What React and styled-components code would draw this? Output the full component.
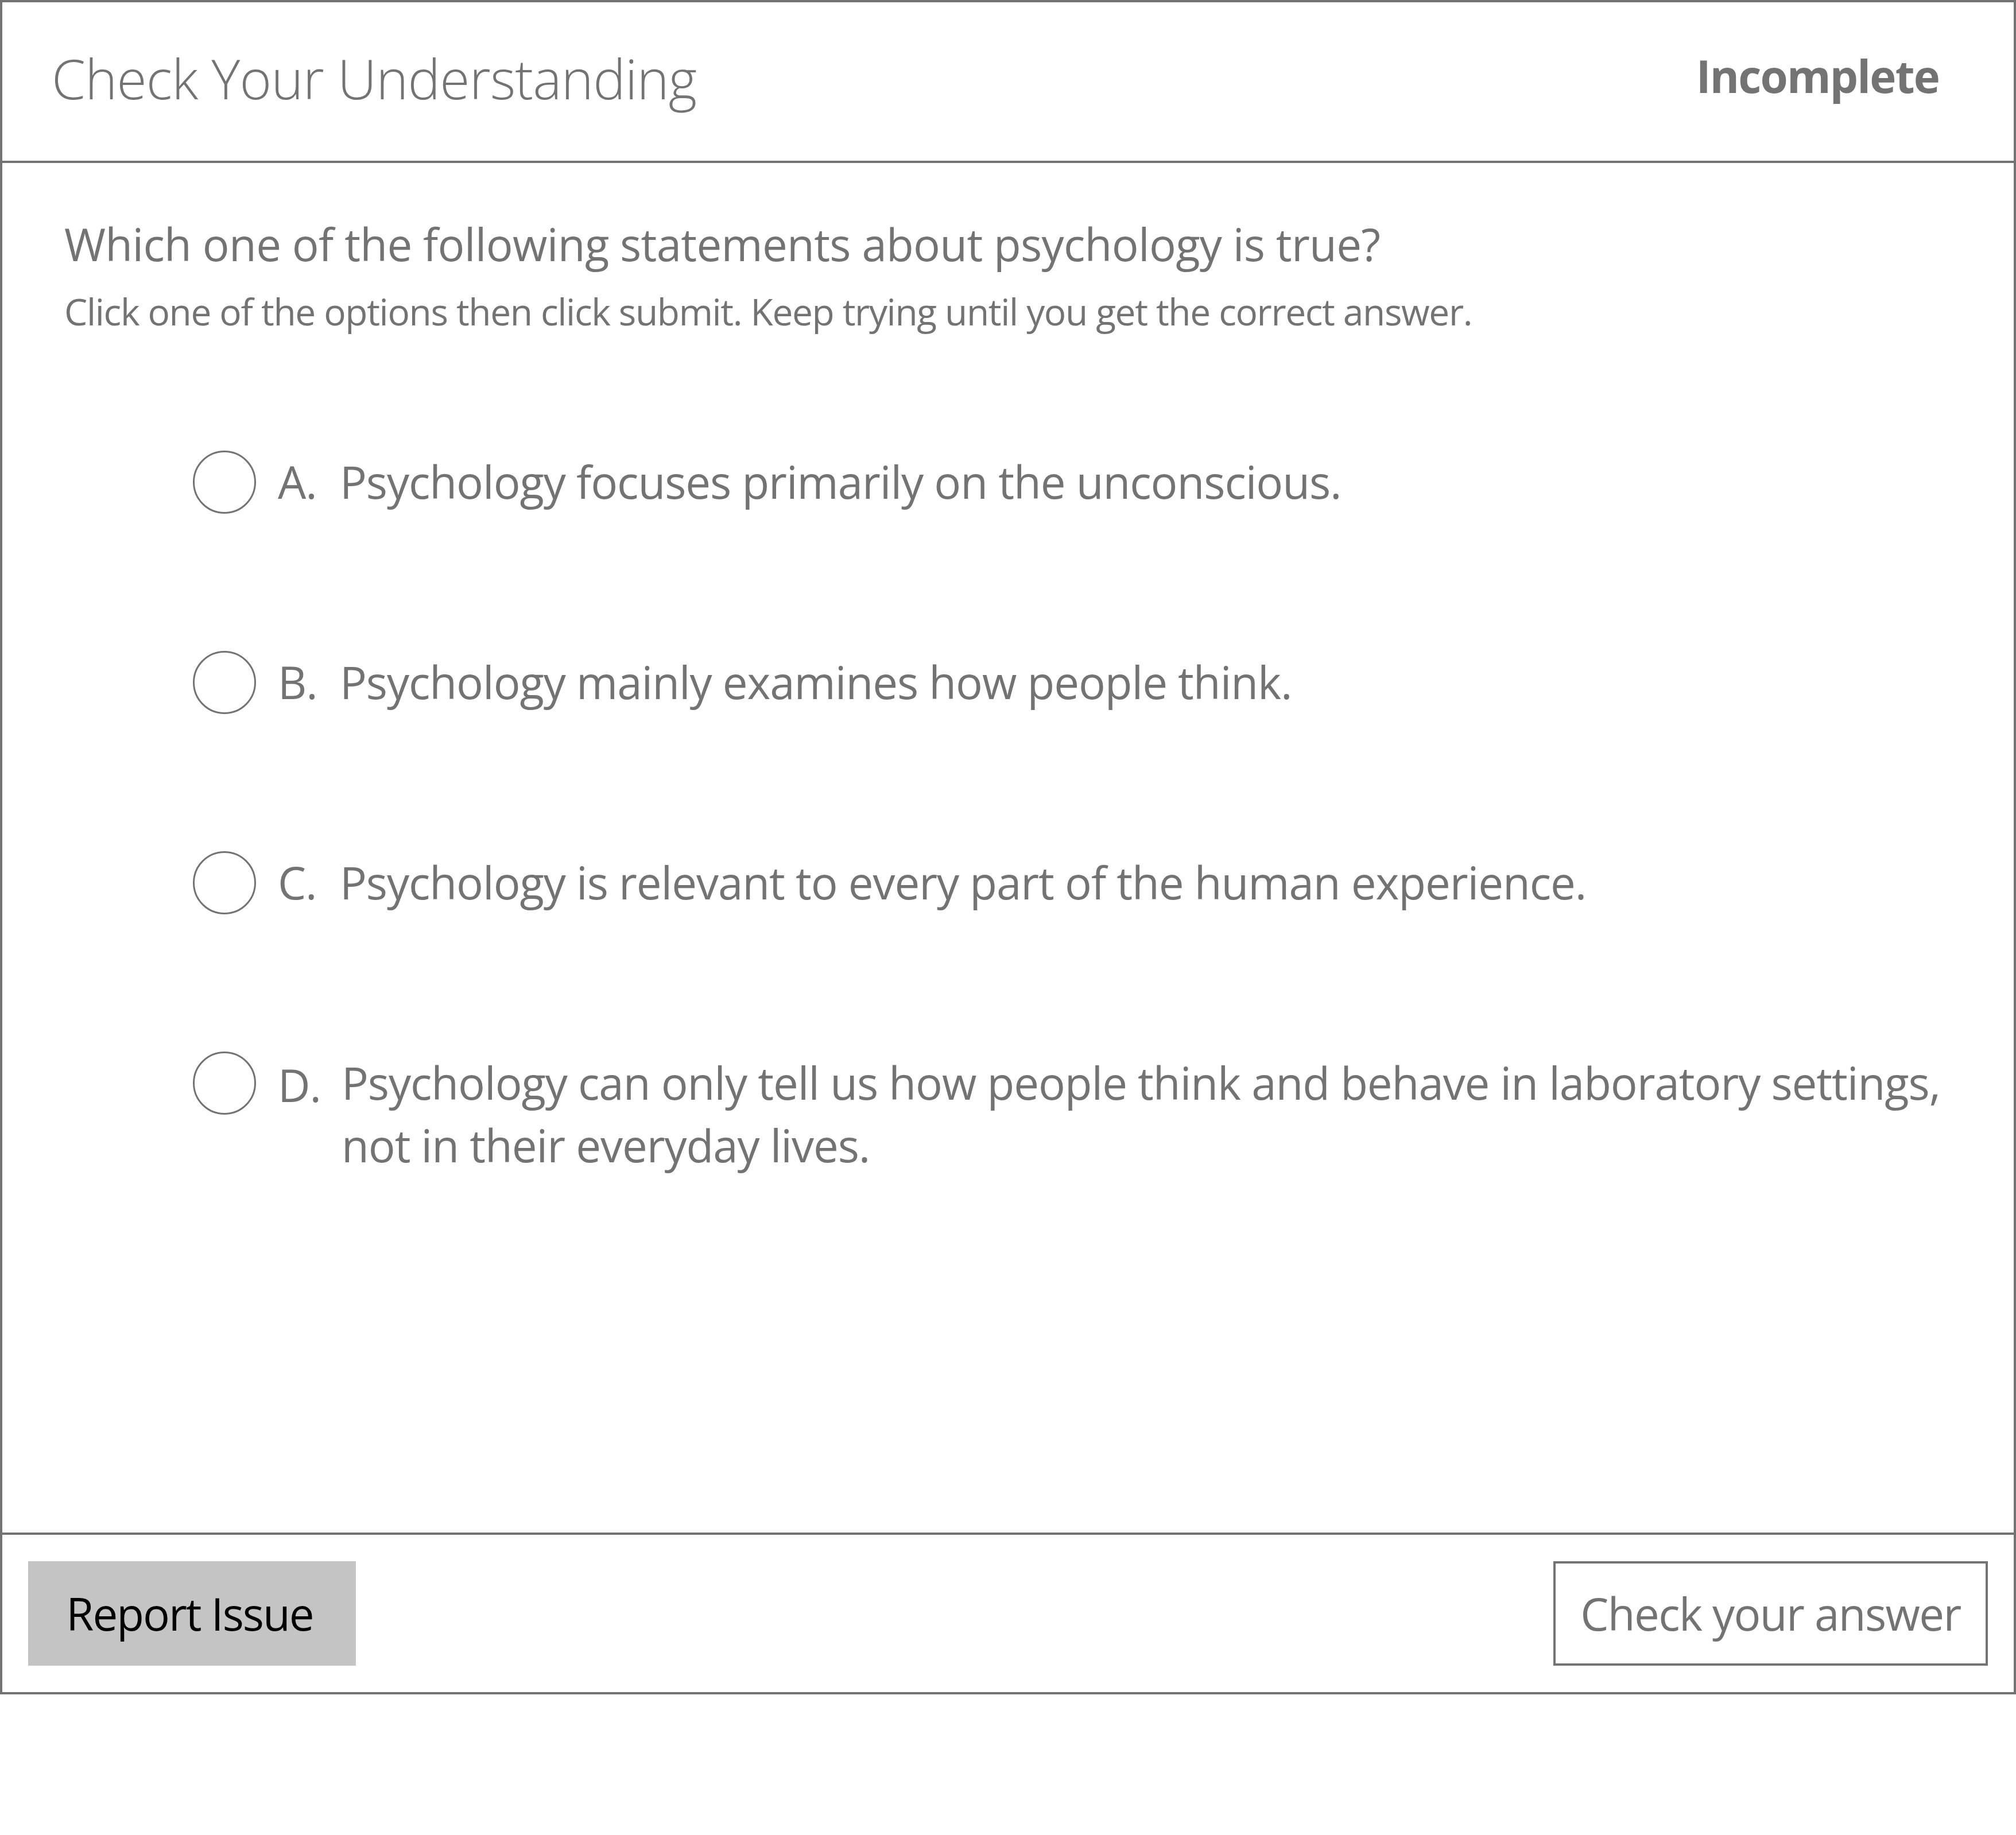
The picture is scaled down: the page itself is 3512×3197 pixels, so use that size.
import React from 'react';
import styled, { createGlobalStyle } from 'styled-components';

const GlobalStyle = createGlobalStyle`
  html, body {
    margin: 0;
    padding: 0;
    background: #ffffff;
  }
  body {
    font-family: 'Open Sans', 'Noto Sans', sans-serif;
    color: #737373;
  }
`;

const Card = styled.div`
  box-sizing: border-box;
  width: 3512px;
  height: 2952px;
  border: 4px solid #737373;
  display: flex;
  flex-direction: column;
  background: #ffffff;
`;

const Header = styled.div`
  box-sizing: border-box;
  height: 280px;
  flex: 0 0 auto;
  display: flex;
  align-items: center;
  justify-content: space-between;
  padding: 0 130px 0 86px;
  border-bottom: 4px solid #737373;
`;

const Title = styled.h1`
  margin: -12px 0 0;
  font-size: 95px;
  font-weight: 300;
  line-height: 1;
  letter-spacing: -0.8px;
  color: #737373;
`;

const Status = styled.div`
  font-size: 78px;
  font-weight: 700;
  line-height: 1;
  letter-spacing: -1.8px;
  color: #737373;
  margin-top: -20px;
`;

const Body = styled.div`
  flex: 1 1 auto;
  padding: 87px 30px 0 108px;
`;

const Question = styled.p`
  margin: 0;
  font-size: 78px;
  line-height: 1.4;
  font-weight: 400;
  letter-spacing: -0.7px;
`;

const Hint = styled.p`
  margin: 18px 0 0;
  font-size: 64px;
  line-height: 1.4;
  letter-spacing: -1.35px;
`;

const OptionList = styled.div`
  display: flex;
  flex-direction: column;
  gap: 239px;
  margin: 197px 0 0 224px;
`;

const Option = styled.label`
  display: grid;
  grid-template-columns: 110px 70px 1fr;
  column-gap: 38px;
  align-items: start;
  font-size: 78px;
  line-height: 1.4;
  letter-spacing: -1.05px;
  cursor: pointer;
`;

const Radio = styled.span`
  box-sizing: border-box;
  width: 110px;
  height: 110px;
  border-radius: 50%;
  border: 3px solid #737373;
`;

const Letter = styled.span`
  white-space: nowrap;
  padding-top: ${props => props.drop || 0}px;
`;

const OptionText = styled.span`
  padding-left: ${props => props.indent || 0}px;
`;

const Footer = styled.div`
  box-sizing: border-box;
  height: 278px;
  flex: 0 0 auto;
  border-top: 4px solid #737373;
  display: flex;
  align-items: center;
  justify-content: space-between;
  padding: 0 45px;
`;

const ReportButton = styled.button`
  width: 571px;
  height: 182px;
  border: none;
  background: #c4c4c4;
  color: #000000;
  font-family: inherit;
  font-size: 78px;
  font-weight: 400;
  letter-spacing: -2px;
  padding: 0 8px 0 0;
  cursor: pointer;
`;

const CheckButton = styled.button`
  box-sizing: border-box;
  width: 757px;
  height: 182px;
  border: 4px solid #737373;
  background: #ffffff;
  color: #737373;
  font-family: inherit;
  font-size: 78px;
  font-weight: 400;
  letter-spacing: -1.6px;
  cursor: pointer;
`;

const options = [
  { letter: 'A.', text: 'Psychology focuses primarily on the unconscious.' },
  { letter: 'B.', text: 'Psychology mainly examines how people think.' },
  { letter: 'C.', text: 'Psychology is relevant to every part of the human experience.' },
  {
    letter: 'D.',
    text: 'Psychology can only tell us how people think and behave in laboratory settings, not in their everyday lives.',
    indent: 3,
    drop: 4,
  },
];

export default function App() {
  return (
    <>
      <GlobalStyle />
      <Card>
        <Header>
          <Title>Check Your Understanding</Title>
          <Status>Incomplete</Status>
        </Header>
        <Body>
          <Question>Which one of the following statements about psychology is true?</Question>
          <Hint>Click one of the options then click submit. Keep trying until you get the correct answer.</Hint>
          <OptionList>
            {options.map(o => (
              <Option key={o.letter}>
                <Radio />
                <Letter drop={o.drop}>{o.letter}</Letter>
                <OptionText indent={o.indent}>{o.text}</OptionText>
              </Option>
            ))}
          </OptionList>
        </Body>
        <Footer>
          <ReportButton>Report Issue</ReportButton>
          <CheckButton>Check your answer</CheckButton>
        </Footer>
      </Card>
    </>
  );
}
